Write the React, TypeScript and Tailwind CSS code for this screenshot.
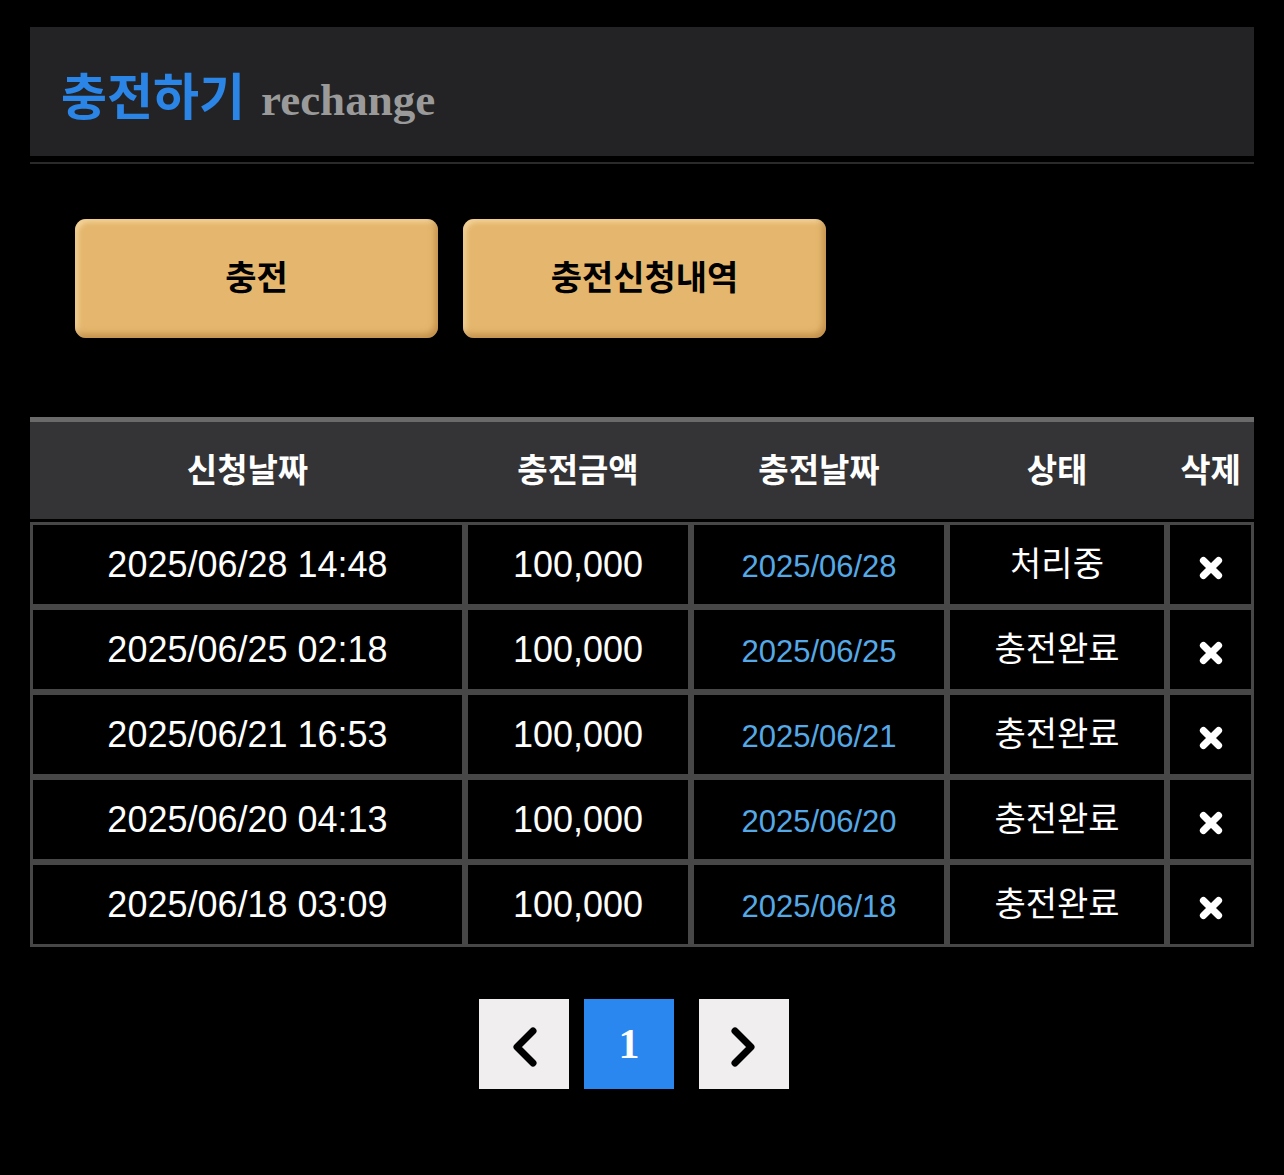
import React from 'react';

type Row = {
  requested: string;
  amount: string;
  charged: string;
  status: string;
};

const rows: Row[] = [
  { requested: '2025/06/28 14:48', amount: '100,000', charged: '2025/06/28', status: '처리중' },
  { requested: '2025/06/25 02:18', amount: '100,000', charged: '2025/06/25', status: '충전완료' },
  { requested: '2025/06/21 16:53', amount: '100,000', charged: '2025/06/21', status: '충전완료' },
  { requested: '2025/06/20 04:13', amount: '100,000', charged: '2025/06/20', status: '충전완료' },
  { requested: '2025/06/18 03:09', amount: '100,000', charged: '2025/06/18', status: '충전완료' },
];

const headers = ['신청날짜', '충전금액', '충전날짜', '상태', '삭제'];

function DeleteIcon() {
  return (
    <svg width="26" height="26" viewBox="0 0 24 24" className="inline-block">
      <path d="M5 5L19 19M19 5L5 19" stroke="#fff" strokeWidth="6.5" strokeLinecap="round" />
    </svg>
  );
}

function Chevron({ dir }: { dir: 'left' | 'right' }) {
  return (
    <svg width="34" height="48" viewBox="0 0 34 48">
      <path
        d={dir === 'left' ? 'M26 8L10 24L26 40' : 'M8 8L24 24L8 40'}
        fill="none"
        stroke="#000"
        strokeWidth="7"
        strokeLinecap="round"
        strokeLinejoin="round"
      />
    </svg>
  );
}

const cell = 'border-[3px] border-[#474747] text-center align-middle h-[85px]';

export default function App() {
  return (
    <div
      className="min-h-[1175px] bg-black px-[30px] pt-[27px] text-white"
      style={{ fontFamily: '"Liberation Sans", "Noto Sans CJK KR", sans-serif' }}
    >
      {/* page title */}
      <div className="h-[129px] bg-[#232325] pl-[31px] flex items-end pb-[33px]">
        <span className="text-[50px] leading-none font-semibold text-[#2a85e6]">충전하기</span>
        <span
          className="ml-[16px] text-[45px] leading-none font-bold text-[#9a9a9a]"
          style={{ fontFamily: '"Liberation Serif", serif' }}
        >
          rechange
        </span>
      </div>
      <div className="mt-[6px] h-[2px] bg-[#2a2a2a]" />

      {/* actions */}
      <div className="mt-[55px] pl-[45px] flex gap-[25px]">
        {['충전', '충전신청내역'].map((label) => (
          <button
            key={label}
            className="w-[363px] h-[119px] rounded-[11px] bg-[#e5b76e] text-black text-[34px] font-bold shadow-[inset_-3px_-4px_6px_rgba(160,105,40,0.5),inset_3px_3px_5px_rgba(255,235,190,0.6)]"
          >
            {label}
          </button>
        ))}
      </div>

      {/* history table */}
      <table className="mt-[79px] w-full table-fixed border-separate border-spacing-0">
        <colgroup>
          <col className="w-[435px]" />
          <col className="w-[226px]" />
          <col className="w-[256px]" />
          <col className="w-[220px]" />
          <col className="w-[87px]" />
        </colgroup>
        <thead>
          <tr>
            {headers.map((h) => (
              <th
                key={h}
                className="h-[105px] bg-[#343335] border-t-[5px] border-t-[#6a6a6a] border-b-[3px] border-b-black text-[33px] font-bold text-white text-center"
              >
                {h}
              </th>
            ))}
          </tr>
        </thead>
        <tbody>
          {rows.map((r) => (
            <tr key={r.requested}>
              <td className={`${cell} text-[36px]`}>{r.requested}</td>
              <td className={`${cell} text-[36px]`}>{r.amount}</td>
              <td className={`${cell} text-[31px] text-[#55a9e6] pt-[5px]`}>{r.charged}</td>
              <td className={`${cell} text-[34px]`}>{r.status}</td>
              <td className={`${cell} pt-[6px]`}>
                <DeleteIcon />
              </td>
            </tr>
          ))}
        </tbody>
      </table>

      {/* pagination */}
      <div className="mt-[52px] flex justify-center pr-[16px]">
        <button className="w-[90px] h-[90px] bg-[#f0eeee] flex items-center justify-center pt-[6px]">
          <Chevron dir="left" />
        </button>
        <button
          className="ml-[15px] w-[90px] h-[90px] bg-[#2a87ef] text-white text-[42px] font-bold flex items-center justify-center"
          style={{ fontFamily: '"Liberation Serif", serif' }}
        >
          1
        </button>
        <button className="ml-[25px] w-[90px] h-[90px] bg-[#f0eeee] flex items-center justify-center pt-[6px]">
          <Chevron dir="right" />
        </button>
      </div>
    </div>
  );
}
